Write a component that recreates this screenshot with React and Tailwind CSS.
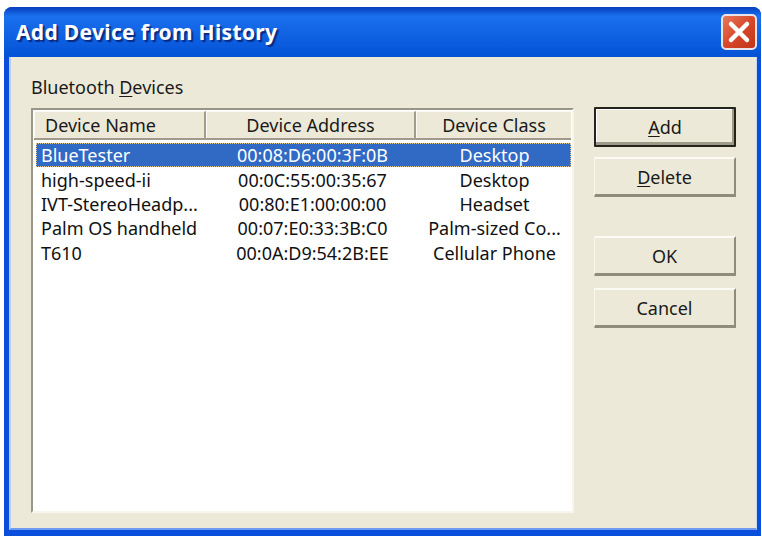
const rows = [
  ["BlueTester", "00:08:D6:00:3F:0B", "Desktop", true],
  ["high-speed-ii", "00:0C:55:00:35:67", "Desktop"],
  ["IVT-StereoHeadp...", "00:80:E1:00:00:00", "Headset"],
  ["Palm OS handheld", "00:07:E0:33:3B:C0", "Palm-sized Co..."],
  ["T610", "00:0A:D9:54:2B:EE", "Cellular Phone"],
];

function Btn({ children, primary, className = "" }) {
  return (
    <button
      className={
        "block w-[142px] h-[40px] text-center text-[#1a1a1a] bg-[#ece9d8] rounded-[1px] " +
        (primary
          ? "border-2 border-[#24241c] shadow-[inset_-2px_-3px_0_#9d9a87,inset_1px_1px_0_#fff] "
          : "border-t-2 border-l border-t-[#fbfaf5] border-l-[#f7f6ef] border-r-2 border-b-[3px] border-r-[#8f8c7b] border-b-[#8f8c7b] ") +
        className
      }
    >
      {children}
    </button>
  );
}

function Head({ w, children, last, left }) {
  return (
    <div
      className={
        "h-[27px] flex items-center text-[#1a1a1a] border-t border-l border-[#fbfaf4] " +
        w +
        (left ? " justify-start pl-[10px]" : " justify-center") +
        (last ? " border-r-0" : " border-r-2 border-r-[#a09d8c]")
      }
    >
      {children}
    </div>
  );
}

export default function App() {
  return (
    <div
      className="w-[762px] h-[539px] bg-white pt-[7px] pl-[4px] text-[18px] leading-none"
      style={{ fontFamily: '"Noto Sans", "Liberation Sans", sans-serif' }}
    >
      <div className="w-[757px] h-[529px] rounded-t-[8px] bg-[#0a4fdc] flex flex-col overflow-hidden">
        <div className="h-[50px] shrink-0 flex items-center justify-between pl-[12px] pr-[4px] bg-gradient-to-b from-[#0a3cbc] via-[#1a70ee] via-[18%] to-[#0452d6]">
          <span className="text-white font-bold text-[21px] tracking-[0.33px] [text-shadow:2px_2px_1px_#0a2a80]">
            Add Device from History
          </span>
          <div className="w-[36px] h-[36px] rounded-[5px] border-2 border-[#e8e4ec] bg-gradient-to-br from-[#e8785a] via-[#d8482a] to-[#c03418] flex items-center justify-center">
            <svg width="26" height="26" viewBox="0 0 26 26">
              <path d="M5 5 L21 21 M21 5 L5 21" stroke="#fff" strokeWidth="4.5" strokeLinecap="round" />
            </svg>
          </div>
        </div>
        <div className="flex-1 flex flex-col pl-[5px] pr-[4px] pb-[6px]">
          <div className="flex-1 bg-[#ece9d8] border-l-2 border-r border-b-2 border-[#b8cdf0] border-r-[#c8d8f0] border-b-[#6f9cf0] flex pl-[20px] pt-[21px]">
            <div className="w-[543px]">
              <div className="h-[30px] text-[#1a1a1a]">
                Bluetooth <span className="underline underline-offset-2">D</span>evices
              </div>
              <div className="w-[543px] h-[405px] border-2 border-[#9a978a] border-r-[#f6f5ee] border-b-[#f6f5ee] bg-white p-[1px]">
                <div className="flex bg-[#ece9d8] border-b-2 border-[#9f9c8c]">
                  <Head w="w-[172px]" left>Device Name</Head>
                  <Head w="w-[210px]">Device Address</Head>
                  <Head w="w-[155px]" last>Device Class</Head>
                </div>
                <div className="pt-[3px] pl-[2px]">
                  {rows.map(([a, b, c, sel]) => (
                    <div
                      key={a}
                      className={
                        "flex h-[24.4px] items-center " +
                        (sel ? "bg-[#316ac5] text-white outline-1 outline-dotted outline-[#e0c890] -outline-offset-1" : "text-[#111]")
                      }
                    >
                      <div className="w-[171px] pl-[5px] whitespace-nowrap">{a}</div>
                      <div className="w-[211px] text-center whitespace-nowrap">{b}</div>
                      <div className="w-[153px] text-center whitespace-nowrap">{c}</div>
                    </div>
                  ))}
                </div>
              </div>
            </div>
            <div className="ml-[20px] -mt-[2px] pt-[31px]">
              <Btn primary className="mb-[10px]"><span className="underline underline-offset-2">A</span>dd</Btn>
              <Btn className="mb-[39px]"><span className="underline underline-offset-2">D</span>elete</Btn>
              <Btn className="mb-[12px]">OK</Btn>
              <Btn>Cancel</Btn>
            </div>
          </div>
        </div>
      </div>
    </div>
  );
}
